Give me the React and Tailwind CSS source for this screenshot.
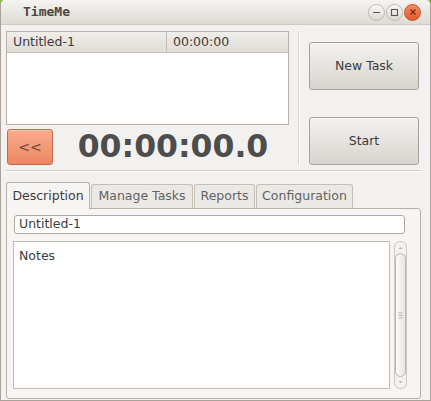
const ui = { fontFamily: '"DejaVu Sans", "Liberation Sans", sans-serif' }

/** 타이틀바 우측 원형 버튼 */
function TitleButton({ kind }) {
  if (kind === 'close') {
    return (
      <span className="flex h-[17px] w-[17px] items-center justify-center rounded-full border border-[#c8542c] bg-gradient-to-b from-[#f48a5e] to-[#e25a2c]">
        <svg width="8" height="8" viewBox="0 0 8 8">
          <path d="M1.5 1.5 L6.5 6.5 M6.5 1.5 L1.5 6.5" stroke="#7a2a10" strokeWidth="1.3" />
        </svg>
      </span>
    )
  }
  return (
    <span className="flex h-[17px] w-[17px] items-center justify-center rounded-full border border-[#bdb7b0] bg-gradient-to-b from-[#fbfaf9] to-[#dcd8d3]">
      <svg width="9" height="9" viewBox="0 0 9 9">
        {kind === 'min' ? (
          <path d="M1 4.5 H8" stroke="#5a5652" strokeWidth="1.2" />
        ) : (
          <rect x="1.5" y="1.5" width="6" height="6" fill="none" stroke="#5a5652" strokeWidth="1.1" />
        )}
      </svg>
    </span>
  )
}

/** 회색 GTK 스타일 버튼 */
function GtkButton({ children, className = '' }) {
  return (
    <button
      className={`flex items-center justify-center rounded-[3px] border border-[#a8a199] bg-gradient-to-b from-[#f3f2f0] to-[#d8d4cf] text-[12.5px] text-[#3c3c3c] shadow-[inset_0_1px_0_#ffffff] ${className}`}
    >
      {children}
    </button>
  )
}

function Tab({ label, active, className = '' }) {
  return active ? (
    <div className={`relative z-10 -mb-px flex h-[27px] items-center justify-center rounded-t-[3px] border border-b-0 border-[#b8b0a6] bg-[#f6f5f4] text-[12.5px] text-[#3c3c3c] ${className}`}>
      {label}
    </div>
  ) : (
    <div className={`mt-[2px] flex h-[24px] items-center justify-center rounded-t-[3px] border border-b-0 border-[#c5beb5] bg-[#ebe9e6] text-[12.5px] text-[#626262] ${className}`}>
      {label}
    </div>
  )
}

export default function App() {
  return (
    <div className="h-[401px] w-[431px] bg-[#87bd3f]" style={ui}>
      <div className="flex h-full flex-col overflow-hidden rounded-t-[5px] border border-t-0 border-[#a9a299] bg-[#f2f1f0]">
        {/* ── 타이틀바 ── */}
        <div className="flex h-[25px] shrink-0 items-center border-b border-[#cfc9c1] bg-gradient-to-b from-[#f5f4f2] to-[#dedad4] pl-[22px] pr-[9px]">
          <span
            className="flex-1 text-[13px] font-bold text-[#4a4642]"
            style={{ fontFamily: '"DejaVu Sans Mono", monospace' }}
          >
            TimeMe
          </span>
          <div className="flex items-center gap-[1px]">
            <TitleButton kind="min" />
            <TitleButton kind="max" />
            <TitleButton kind="close" />
          </div>
        </div>

        {/* ── 상단: 태스크 목록 + 타이머 + 버튼 ── */}
        <div className="flex h-[140px] shrink-0 pl-[5px] pt-[6px]">
          <div className="flex w-[283px] shrink-0 flex-col">
            <div className="h-[94px] shrink-0 border border-[#b9b1a7] bg-white">
              <div className="flex h-[21px] border-b border-[#c9c2b9] bg-gradient-to-b from-[#f0eeeb] to-[#e0dcd6] text-[12.5px] text-[#3c3c3c]">
                <div className="flex w-[160px] items-center border-r border-[#c6bfb6] pl-[6px]">Untitled-1</div>
                <div className="flex flex-1 items-center pl-[6px]">00:00:00</div>
              </div>
            </div>
            <div className="mt-[4px] flex h-[36px] shrink-0 items-center">
              <button className="ml-[1px] flex h-[36px] w-[46px] items-center justify-center rounded-[3px] border border-[#c46a4c] bg-gradient-to-b from-[#f8ad8e] to-[#ec8660] text-[14px] text-[#6a4436] shadow-[inset_0_1px_0_#fbc8b2]">
                &lt;&lt;
              </button>
              <div className="flex-1 pl-[4px] text-center text-[31.5px] font-bold leading-none text-[#4d4d4d]">
                00:00:00.0
              </div>
            </div>
          </div>
          <div className="ml-[9px] w-px bg-[#d9d4ce] shadow-[1px_0_0_#ffffff]" />
          <div className="ml-[10px] flex flex-col pt-[11px]">
            <GtkButton className="h-[48px] w-[110px]">New Task</GtkButton>
            <GtkButton className="mt-[27px] h-[48px] w-[110px]">Start</GtkButton>
          </div>
        </div>

        <div className="ml-[5px] mt-[5px] h-px w-[415px] shrink-0 bg-[#d3cdc6] shadow-[0_1px_0_#ffffff]" />

        {/* ── 탭 ── */}
        <div className="mt-[11px] flex flex-1 flex-col px-[5px] pb-[1px]">
          <div className="flex gap-[1px]">
            <Tab label="Description" active className="w-[84px]" />
            <Tab label="Manage Tasks" className="w-[102px]" />
            <Tab label="Reports" className="w-[61px]" />
            <Tab label="Configuration" className="w-[97px]" />
          </div>
          <div className="flex w-[415px] flex-1 flex-col rounded-b-[3px] rounded-tr-[3px] border border-[#b8b0a6] bg-[#f6f5f4] pl-[6px] pt-[6px]">
            <div className="ml-[1px] flex h-[19px] w-[391px] items-center rounded-[3px] border border-[#b1a99f] bg-white pl-[4px] text-[12.5px] text-[#3c3c3c]">
              Untitled-1
            </div>
            <div className="mt-[7px] flex h-[148px]">
              <div className="w-[377px] border border-[#c3bbb1] bg-white px-[5px] pt-[5px] text-[12.5px] text-[#3c3c3c]">
                Notes
              </div>
              {/* 스크롤바 */}
              <div className="ml-[4px] flex w-[13px] flex-col items-center rounded-[6px] border border-[#cfc9c2] bg-[#f3f2f0]">
                <svg width="7" height="10" viewBox="0 0 7 10" className="mt-[1px] shrink-0">
                  <path d="M1.5 6 L3.5 4 L5.5 6 Z" fill="#b6b0a9" />
                </svg>
                <div className="flex w-[11px] flex-1 items-center justify-center rounded-[6px] border border-[#bcb5ad] bg-gradient-to-r from-[#fbfafa] to-[#e9e6e2]">
                  <svg width="5" height="7" viewBox="0 0 5 7">
                    <path d="M0.5 1 H4.5 M0.5 3.5 H4.5 M0.5 6 H4.5" stroke="#b9b2aa" strokeWidth="1" />
                  </svg>
                </div>
                <svg width="7" height="10" viewBox="0 0 7 10" className="mb-[1px] shrink-0">
                  <path d="M1.5 4 L3.5 6 L5.5 4 Z" fill="#b6b0a9" />
                </svg>
              </div>
            </div>
          </div>
        </div>
      </div>
    </div>
  )
}
